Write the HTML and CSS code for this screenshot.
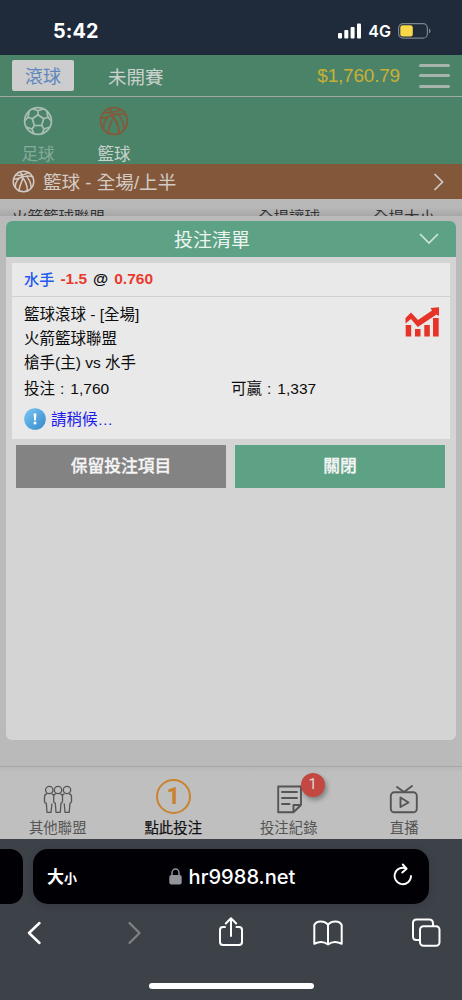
FILE: index.html
```html
<!DOCTYPE html>
<html lang="zh-Hant">
<head>
<meta charset="utf-8">
<meta name="viewport" content="width=device-width">
<title>投注清單</title>
<link rel="stylesheet" href="styles.css">
</head>
<body>
<svg class="defs" width="0" height="0">
  <symbol id="basketball" viewBox="0 0 30 30">
    <g fill="none" stroke="currentColor" stroke-width="1.9" stroke-linecap="round">
      <circle cx="15" cy="15" r="13.4"/>
      <path d="M9 2.8C12.500 4 14.500 6.500 14 11C13.500 15 10 19 9 27.300M5 6C9 8 17 6 22 3.500M2 12C8 12 12 9 19 8C23 7.500 25 8 27 9M12 8C17 13 20 19 20 27.500M19 8C23 13 25 17 25 23M9 11C6 14 4 18 4.500 23"/>
    </g>
  </symbol>
</svg>

<div class="status">
  <span class="clock">5:42</span>
  <div class="indicators">
    <svg width="24" height="16" viewBox="0 0 24 16" fill="#fff"><rect x="0" y="10" width="4" height="5.500" rx="1"/><rect x="6.300" y="7" width="4" height="8.500" rx="1"/><rect x="12.600" y="4" width="4" height="11.500" rx="1"/><rect x="19" y="0.500" width="4" height="15" rx="1"/></svg>
    <span class="network">4G</span>
    <svg class="battery" width="33" height="16" viewBox="0 0 33 16"><rect x=".6" y=".6" width="28.800" height="14.600" rx="4.500" fill="none" stroke="#7b838c" stroke-width="1.200"/><rect x="2.300" y="2.300" width="12.500" height="11.200" rx="2.500" fill="#f8d748"/><path d="M31 5.500c2 .8 2 4 0 4.800z" fill="#7b838c"/></svg>
  </div>
</div>

<header class="topbar">
  <span class="tab-live">滾球</span>
  <span class="tab-early">未開賽</span>
  <span class="balance">$1,760.79</span>
  <div class="menu"><i></i><i></i><i></i></div>
</header>

<nav class="sports">
  <div class="sport">
    <svg width="30" height="30" viewBox="0 0 30 30" fill="none" stroke="currentColor" stroke-width="1.700" stroke-linejoin="round"><circle cx="15" cy="15" r="13.400"/><path d="M15 8.700L20.700 12.800L18.600 19.500H11.400L9.300 12.800ZM15 8.700V4.700M20.700 12.800L25 11.300M18.600 19.500L21 23M11.400 19.500L9 23M9.300 12.800L5 11.300M9.500 2.800L15 4.700L20.500 2.800M23.800 5L25 11.300L28.500 15M27 21L21 23L19 28M11 28L9 23L3 21M1.500 15L5 11.300L6.200 5"/></svg>
    <span>足球</span>
  </div>
  <div class="sport sport-active">
    <svg width="30" height="30"><use href="#basketball"/></svg>
    <span>籃球</span>
  </div>
</nav>

<div class="section">
  <svg width="23" height="23"><use href="#basketball"/></svg>
  <span class="section-name">籃球 - 全場/上半</span>
  <svg class="section-arrow" width="12" height="18" viewBox="0 0 12 18" fill="none" stroke="currentColor" stroke-width="1.700"><path d="M1.500 1L9.500 9L1.500 17"/></svg>
</div>

<div class="columns"><span>火箭籃球聯盟</span><span>全場讓球</span><span>全場大小</span></div>

<main class="sheet">
  <section class="slip">
    <div class="slip-head">
      <span>投注清單</span>
      <svg class="slip-arrow" width="20" height="12" viewBox="0 0 20 12" fill="none" stroke="#cde5d9" stroke-width="1.700"><path d="M1 1L10 10L19 1"/></svg>
    </div>
    <div class="bet">
      <div class="pick"><b class="team">水手</b><b class="red">-1.5</b><b>@</b><b class="red">0.760</b></div>
      <div class="details">
        <svg class="chart" width="35" height="30" viewBox="0 0 35 30" fill="#e63428"><rect x=".7" y="18" width="5.500" height="11.500"/><rect x="10" y="22" width="5.500" height="7.500"/><rect x="19.300" y="18" width="5.500" height="11.500"/><rect x="28" y="11" width="5.700" height="18.500"/><path d="M.5 11L6 5.500L13 13L27 3.500L25.500 1L34 .3V9L31.500 7.500L12.800 20L6 12L.5 16.500Z"/></svg>
        <div class="line">籃球滾球 - [全場]</div>
        <div class="line">火箭籃球聯盟</div>
        <div class="line">槍手(主) vs 水手</div>
        <div class="line amounts"><span>投注<i>:</i>1,760</span><span>可贏<i>:</i>1,337</span></div>
        <div class="waiting">
          <svg width="22" height="22" viewBox="0 0 22 22"><defs><linearGradient id="info" x2="1" y2="1"><stop stop-color="#79c8f5"/><stop offset="1" stop-color="#3588c9"/></linearGradient></defs><circle cx="11" cy="11" r="10.800" fill="url(#info)"/><path d="M9.600 5.500h2.800l-.5 7h-1.800z" fill="#fff"/><circle cx="11" cy="15" r="1.500" fill="#fff"/></svg>
          <span>請稍候…</span>
        </div>
      </div>
    </div>
    <div class="actions"><div class="button keep">保留投注項目</div><div class="button close">關閉</div></div>
  </section>
</main>

<nav class="tabs">
  <div class="tab">
    <svg width="36" height="36" viewBox="0 0 36 36" fill="none" stroke="currentColor" stroke-width="1.300" stroke-linejoin="round"><circle cx="9.300" cy="11" r="3.700"/><circle cx="18" cy="11" r="3.700"/><circle cx="27" cy="11" r="3.700"/><path d="M7 14.800Q4.500 15 4.500 18V22.500Q4.500 24 6.300 24.200L7 33.300H11L12 24.500M13.700 17V22Q13.700 24 15.300 24.200L16 33.300H20.300L21 24.200Q22.500 24 22.500 22V17M11.500 14.800Q13.500 15 13.700 17Q14 15 16 14.800M20 14.800Q22.300 15 22.500 17Q22.700 15 24.500 14.800M29 14.800Q31.500 15 31.500 18V22.500Q31.500 24 30 24.200L29.200 33.300H25L24.200 24.500"/></svg>
    <span>其他聯盟</span>
  </div>
  <div class="tab tab-current"><b class="count">1</b><span>點此投注</span></div>
  <div class="tab">
    <div class="icon-holder">
      <svg width="36" height="36" viewBox="0 0 36 36" fill="none" stroke="currentColor" stroke-width="1.900" stroke-linejoin="round" stroke-linecap="round"><path d="M7.200 7.500H30V26L22.500 33.200H7.200ZM22.500 33V26H30M11 13H26M11 19H26M11 25H18.500"/></svg>
      <span class="badge">1</span>
    </div>
    <span>投注紀錄</span>
  </div>
  <div class="tab">
    <svg width="36" height="36" viewBox="0 0 36 36" fill="none" stroke="currentColor" stroke-width="1.900" stroke-linejoin="round" stroke-linecap="round"><rect x="4.800" y="13.300" width="26" height="20" rx="3.500"/><path d="M11 8L18 13L26 7M14.500 18.500L22.500 23.500L14.500 28Z"/></svg>
    <span>直播</span>
  </div>
</nav>

<footer class="browser">
  <div class="address-row">
    <div class="previous-page"></div>
    <div class="address">
      <span class="text-size">大<small>小</small></span>
      <div class="host"><svg width="13" height="17" viewBox="0 0 13 17"><rect x=".3" y="7" width="12.400" height="9.500" rx="2" fill="#92939b"/><path d="M3 8V5a3.500 4 0 0 1 7 0v3" fill="none" stroke="#92939b" stroke-width="1.500"/></svg><span>hr9988.net</span></div>
      <svg class="reload" width="20" height="23" viewBox="0 0 20 23" fill="none" stroke="#fff" stroke-width="1.900" stroke-linecap="round" stroke-linejoin="round"><path d="M18 13A8.200 8.200 0 1 1 13.400 5.600M9.800 1.500L13.600 5.700L9.300 9.500"/></svg>
    </div>
  </div>
  <div class="tools">
    <svg width="16" height="24" viewBox="0 0 16 24" fill="none" stroke="#fff" stroke-width="2.500" stroke-linecap="round" stroke-linejoin="round"><path d="M13.500 2L3 12L13.500 22"/></svg>
    <svg class="forward" width="16" height="24" viewBox="0 0 16 24" fill="none" stroke="#7f8287" stroke-width="2.200" stroke-linecap="round" stroke-linejoin="round"><path d="M2.500 2L12.500 12L2.500 22"/></svg>
    <svg class="share" width="28" height="31" viewBox="0 0 28 31" fill="none" stroke="#fff" stroke-width="2" stroke-linecap="round" stroke-linejoin="round"><path d="M8 11H6Q3 11 3 14V26Q3 29 6 29H22Q25 29 25 26V14Q25 11 22 11H19.500M14 20V2.500M8.800 7.500L14 2.300L19.200 7.500"/></svg>
    <svg width="30" height="26" viewBox="0 0 30 26" fill="none" stroke="#fff" stroke-width="2" stroke-linejoin="round"><path d="M15 24.500Q9 20 1.300 23.800V5Q3 1.500 7.500 1.500Q13 1.500 15 5Q17 1.500 22.500 1.500Q27 1.500 28.700 5V23.800Q21 20 15 24.500V5"/></svg>
    <svg width="30" height="30" viewBox="0 0 30 30" fill="none" stroke="#fff" stroke-width="2"><path d="M8 22H5.500Q2 22 2 18.500V5Q2 1.500 5.500 1.500H18Q22 1.500 22 5.500V8"/><rect x="9" y="8.300" width="19.500" height="19.500" rx="3.500"/></svg>
  </div>
  <div class="home-bar"></div>
</footer>
</body>
</html>
```

FILE: styles.css
```css
* { box-sizing: border-box; }
html, body { margin: 0; }
body {
  width: 462px;
  height: 1000px;
  overflow: hidden;
  display: flex;
  flex-direction: column;
  background: #bababa;
  font-family: "Liberation Sans", "Noto Sans CJK TC", sans-serif;
  color: #0c0c0c;
}
body > * { flex-shrink: 0; }
svg { display: block; flex-shrink: 0; }
.defs { position: absolute; }
i { font-style: normal; }

.status {
  height: 55px;
  padding: 7px 31px 0 53px;
  display: flex;
  align-items: center;
  justify-content: space-between;
  background: #1f2b3b;
  color: #fff;
  font-family: Inter, sans-serif;
}
.clock { font-size: 19.8px; font-weight: 700; letter-spacing: .1px; }
.indicators { display: flex; align-items: center; }
.network { margin: 0 7px 0 6px; font-size: 16px; font-weight: 600; }

.topbar {
  height: 42px;
  display: flex;
  align-items: center;
  padding: 0 12px;
  background: #4b8368;
  border-bottom: 1px solid #a3aaa6;
  color: #c9d2cd;
}
.tab-live {
  width: 62px;
  height: 31px;
  padding-top: 3px;
  line-height: 29px;
  border-radius: 2px;
  background: #cdcdcd;
  color: #5f88bd;
  font-size: 18px;
  text-align: center;
}
.tab-early { margin-left: 34px; font-size: 18.5px; }
.balance { margin-left: auto; color: #c9b035; font-size: 19px; letter-spacing: -.2px; }
.menu { width: 31px; height: 24px; margin: 0 0 0 19px; display: flex; flex-direction: column; justify-content: space-between; }
.menu i { height: 3px; border-radius: 2px; background: #a7b4ad; }

.sports { height: 67px; padding-top: 9px; display: flex; background: #4b8368; }
.sport { width: 76px; display: flex; flex-direction: column; align-items: center; color: #a8bfb4; }
.sport span { margin-top: 6px; font-size: 16.5px; line-height: 24px; color: #86aa98; }
.sport-active { color: #805c3d; }
.sport-active span { color: #c9d3ce; }

.section { height: 35px; padding: 0 17px 0 12px; display: flex; align-items: center; background: #83583a; color: #d2cbc6; }
.section-name { margin: -2px 0 0 8px; font-size: 18.6px; }
.section-arrow { margin-left: auto; }

.columns {
  height: 17px;
  padding-left: 12px;
  display: grid;
  grid-template-columns: 246px 115px 1fr;
  overflow: hidden;
  background: linear-gradient(#b8b8b8 50%, #a6a6a6);
  color: #343434;
  font-size: 15.5px;
  line-height: 38px;
}

.sheet { height: 550px; padding: 5px 6px 0; background: #bababa; }
.slip { height: 519px; border-radius: 6px; overflow: hidden; background: #d4d4d4; }
.slip-head {
  height: 36px;
  padding: 0 17px 2px 0;
  display: grid;
  grid-template-columns: 20px 1fr 20px;
  align-items: center;
  text-align: center;
  background: #5da285;
  color: #edf5f1;
  font-size: 19px;
}
.slip-head span { grid-column: 2; margin-right: 21px; }
.slip-arrow { margin-top: 2px; }
.bet { margin: 6px 6px 0; height: 176px; background: #e9e9e9; }
.pick { height: 34px; padding: 0 0 1px 12px; border-bottom: 1px solid #d0d0d0; display: flex; align-items: center; gap: 6px; font-size: 15.5px; }
.team { margin-top: -3px; color: #2459ee; font-size: 15.2px; font-weight: 500; }
.red { color: #e93a2d; }
.details { padding: 6px 12px 0; font-size: 15.5px; display: flow-root; }
.line { height: 24px; line-height: 24px; white-space: nowrap; }
.chart { float: right; margin: 4px -2px 0 0; }
.amounts { margin-top: 2px; display: grid; grid-template-columns: 207px 1fr; }
.amounts i { padding: 0 6px 0 5px; }
.waiting { margin-top: 7px; height: 22px; display: flex; align-items: center; gap: 5px; color: #1818e8; }
.waiting span { margin-top: -3px; }
.actions { padding: 6px 11px 0 10px; display: grid; grid-template-columns: 1fr 1fr; gap: 9px; }
.button { height: 43px; line-height: 43px; text-align: center; color: #f5f5f5; font-size: 16.8px; font-weight: 500; -webkit-text-stroke: .3px currentColor; }
.keep { background: #838383; }
.close { background: #5da285; }

.tabs {
  height: 73px;
  display: grid;
  grid-template-columns: repeat(4, 1fr);
  border-top: 1px solid #a6a6a6;
  background: linear-gradient(#b8b8b8, #bfbfbf 6px);
  color: #555;
}
.tab { display: flex; flex-direction: column; align-items: center; padding-top: 12px; }
.tab > span { margin-top: 3px; font-size: 14.4px; line-height: 20px; }
.tab-current { color: #101010; -webkit-text-stroke: .2px currentColor; }
.count { width: 35px; height: 35px; margin-bottom: 1px; border: 2px solid #c9822d; border-radius: 50%; color: #c9822d; font: 700 23px/32px Roboto, sans-serif; text-align: center; }
.icon-holder { position: relative; }
.badge {
  position: absolute;
  left: 30px;
  top: -6px;
  width: 24px;
  height: 24px;
  border-radius: 50%;
  background: #c34842;
  box-shadow: 2px 3px 5px #0005;
  color: #dadada;
  font: 15px/23px Roboto, sans-serif;
  text-align: center;
}

.browser { height: 161px; padding-top: 10px; background: #3d4148; color: #fff; font-family: Inter, "Noto Sans CJK TC", sans-serif; }
.address-row { display: flex; gap: 10px; }
.previous-page { width: 23px; height: 55px; border-radius: 0 13px 13px 0; background: #000005; }
.address { width: 396px; height: 55px; padding: 0 16px 0 14px; border-radius: 15px; background: #000005; box-shadow: 0 2px 8px #0002; display: grid; grid-template-columns: 60px 1fr 60px; align-items: center; }
.text-size { margin-top: -2px; font-size: 17px; font-weight: 700; }
.text-size small { font-size: 13px; }
.host { margin-left: 4px; display: flex; align-items: center; justify-content: center; gap: 7px; font-size: 20.1px; font-weight: 500; }
.reload { justify-self: end; margin-top: -4px; }
.tools { height: 58px; margin: 0 -15px; display: grid; grid-template-columns: repeat(5, 98px); place-items: center; }
.forward { margin-left: 5px; }
.share { margin: 0 0 4px 2px; }
.home-bar { width: 165px; height: 6px; margin: 21px auto 0; border-radius: 3px; background: #fff; }
```
